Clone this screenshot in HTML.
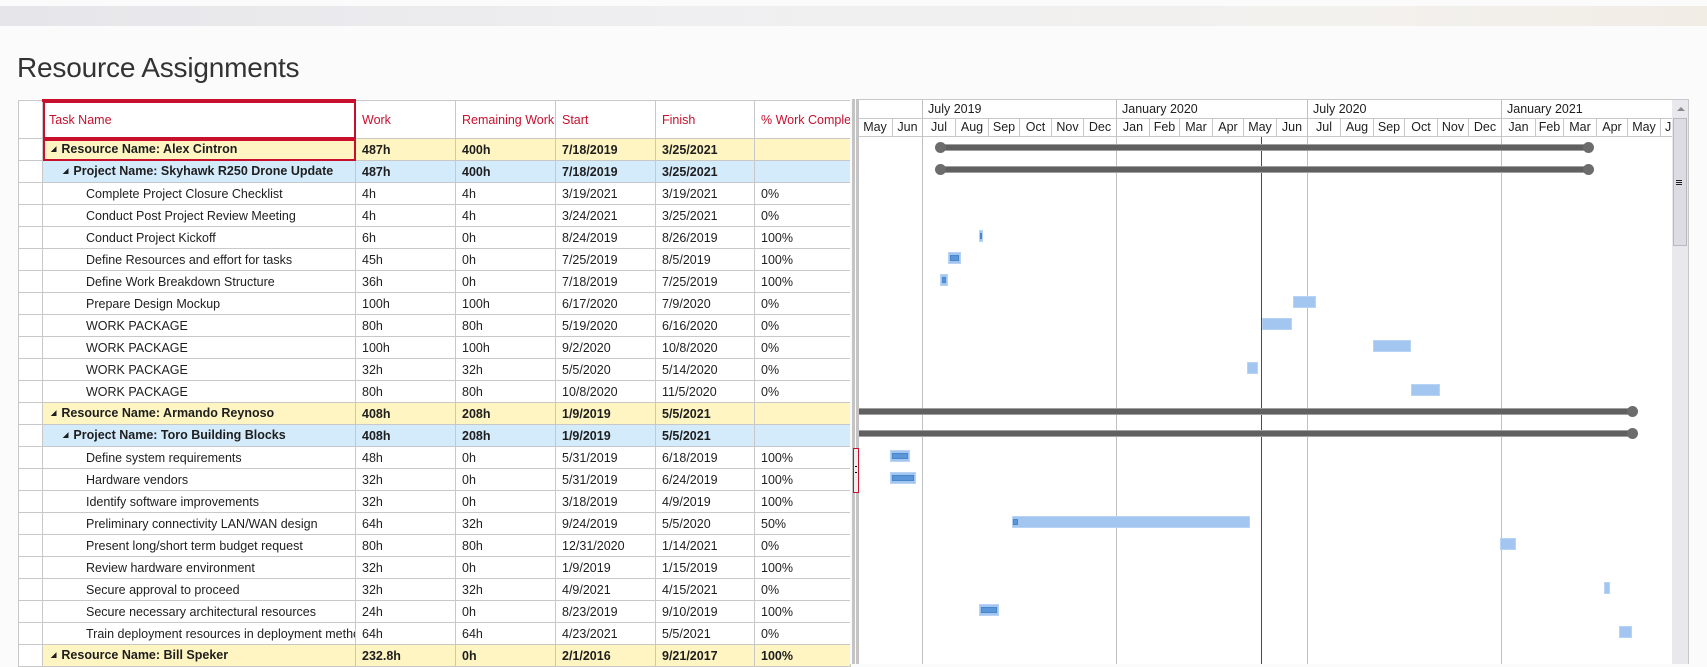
<!DOCTYPE html>
<html><head><meta charset="utf-8"><style>
*{margin:0;padding:0;box-sizing:border-box}
body{width:1707px;height:664px;overflow:hidden;background:#fbfbfb;font-family:"Liberation Sans",sans-serif;color:#1e1e1e;position:relative}
.band{position:absolute;left:0;top:6px;width:1707px;height:20px;background:linear-gradient(90deg,#e6e6ea,#efeff1 40%,#f3f1ee 80%,#f1ece4)}
h1{position:absolute;left:17px;top:52px;font-size:28px;font-weight:normal;color:#333;letter-spacing:-0.2px}
table{position:absolute;left:18px;top:99px;width:832px;border-collapse:collapse;table-layout:fixed;font-size:12.5px;background:#fff}
td{border:1px solid #c8c8c8;height:22px;white-space:nowrap;overflow:hidden;padding:0 0 0 6px;line-height:20px}
tr.h td{height:38px;color:#c8102e;font-size:12.5px;padding-left:6px}
tr.r td{background:#fff5c3;font-weight:bold}
tr.p td{background:#d4ebfc;font-weight:bold}
tr td:first-child{background:#fff!important}
.t1{padding-left:8px!important}.t2{padding-left:20px!important}.t3{padding-left:43px!important}
.tri{font-size:7px;vertical-align:2px;margin-right:5px}
.sel{outline:2px solid #c8102e;outline-offset:-2px}
.g{position:absolute}
.mo{position:absolute;top:118px;height:19px;border-left:1px solid #c8c8c8;font-size:12.5px;line-height:19px;text-align:center}
.yr{position:absolute;top:100px;height:18px;font-size:12.5px;line-height:18px;padding-left:6px}
.vl{position:absolute;top:100px;width:1px;height:564px;background:#c0c0c0}
.b{position:absolute;height:12px;background:#a2c6ef;border:1px solid #b8d4f4}
.b i{position:absolute;left:1px;right:1px;top:2px;height:6px;background:#5b96d8;border:1px solid #4a86cc}
.s{position:absolute;height:7px;background:#5f605f;border-top:1px solid #a0a0a0;border-bottom:1px solid #a0a0a0}
.c{position:absolute;width:11px;height:11px;border-radius:50%;background:#6c6c6c}
</style></head><body>
<div class="band"></div>
<h1>Resource Assignments</h1>
<table>
<colgroup><col style="width:24px"><col style="width:313px"><col style="width:100px"><col style="width:100px"><col style="width:100px"><col style="width:99px"><col style="width:96px"></colgroup>
<tr class="h"><td></td><td class="sel" style="border-top:3px solid #c8102e">Task Name</td><td>Work</td><td>Remaining Work</td><td>Start</td><td>Finish</td><td>% Work Complete</td></tr>
<tr class="r"><td></td><td class="t1 sel"><span class="tri">◢</span>Resource Name: Alex Cintron</td><td>487h</td><td>400h</td><td>7/18/2019</td><td>3/25/2021</td><td></td></tr>
<tr class="p"><td></td><td class="t2"><span class="tri">◢</span>Project Name: Skyhawk R250 Drone Update</td><td>487h</td><td>400h</td><td>7/18/2019</td><td>3/25/2021</td><td></td></tr>
<tr><td></td><td class="t3">Complete Project Closure Checklist</td><td>4h</td><td>4h</td><td>3/19/2021</td><td>3/19/2021</td><td>0%</td></tr>
<tr><td></td><td class="t3">Conduct Post Project Review Meeting</td><td>4h</td><td>4h</td><td>3/24/2021</td><td>3/25/2021</td><td>0%</td></tr>
<tr><td></td><td class="t3">Conduct Project Kickoff</td><td>6h</td><td>0h</td><td>8/24/2019</td><td>8/26/2019</td><td>100%</td></tr>
<tr><td></td><td class="t3">Define Resources and effort for tasks</td><td>45h</td><td>0h</td><td>7/25/2019</td><td>8/5/2019</td><td>100%</td></tr>
<tr><td></td><td class="t3">Define Work Breakdown Structure</td><td>36h</td><td>0h</td><td>7/18/2019</td><td>7/25/2019</td><td>100%</td></tr>
<tr><td></td><td class="t3">Prepare Design Mockup</td><td>100h</td><td>100h</td><td>6/17/2020</td><td>7/9/2020</td><td>0%</td></tr>
<tr><td></td><td class="t3">WORK PACKAGE</td><td>80h</td><td>80h</td><td>5/19/2020</td><td>6/16/2020</td><td>0%</td></tr>
<tr><td></td><td class="t3">WORK PACKAGE</td><td>100h</td><td>100h</td><td>9/2/2020</td><td>10/8/2020</td><td>0%</td></tr>
<tr><td></td><td class="t3">WORK PACKAGE</td><td>32h</td><td>32h</td><td>5/5/2020</td><td>5/14/2020</td><td>0%</td></tr>
<tr><td></td><td class="t3">WORK PACKAGE</td><td>80h</td><td>80h</td><td>10/8/2020</td><td>11/5/2020</td><td>0%</td></tr>
<tr class="r"><td></td><td class="t1"><span class="tri">◢</span>Resource Name: Armando Reynoso</td><td>408h</td><td>208h</td><td>1/9/2019</td><td>5/5/2021</td><td></td></tr>
<tr class="p"><td></td><td class="t2"><span class="tri">◢</span>Project Name: Toro Building Blocks</td><td>408h</td><td>208h</td><td>1/9/2019</td><td>5/5/2021</td><td></td></tr>
<tr><td></td><td class="t3">Define system requirements</td><td>48h</td><td>0h</td><td>5/31/2019</td><td>6/18/2019</td><td>100%</td></tr>
<tr><td></td><td class="t3">Hardware vendors</td><td>32h</td><td>0h</td><td>5/31/2019</td><td>6/24/2019</td><td>100%</td></tr>
<tr><td></td><td class="t3">Identify software improvements</td><td>32h</td><td>0h</td><td>3/18/2019</td><td>4/9/2019</td><td>100%</td></tr>
<tr><td></td><td class="t3">Preliminary connectivity LAN/WAN design</td><td>64h</td><td>32h</td><td>9/24/2019</td><td>5/5/2020</td><td>50%</td></tr>
<tr><td></td><td class="t3">Present long/short term budget request</td><td>80h</td><td>80h</td><td>12/31/2020</td><td>1/14/2021</td><td>0%</td></tr>
<tr><td></td><td class="t3">Review hardware environment</td><td>32h</td><td>0h</td><td>1/9/2019</td><td>1/15/2019</td><td>100%</td></tr>
<tr><td></td><td class="t3">Secure approval to proceed</td><td>32h</td><td>32h</td><td>4/9/2021</td><td>4/15/2021</td><td>0%</td></tr>
<tr><td></td><td class="t3">Secure necessary architectural resources</td><td>24h</td><td>0h</td><td>8/23/2019</td><td>9/10/2019</td><td>100%</td></tr>
<tr><td></td><td class="t3">Train deployment resources in deployment methods</td><td>64h</td><td>64h</td><td>4/23/2021</td><td>5/5/2021</td><td>0%</td></tr>
<tr class="r"><td></td><td class="t1"><span class="tri">◢</span>Resource Name: Bill Speker</td><td>232.8h</td><td>0h</td><td>2/1/2016</td><td>9/21/2017</td><td>100%</td></tr>
</table>

<div class="g" style="left:850px;top:99px;width:9px;height:565px;background:#fbfbfb"></div>
<div class="g" style="left:852px;top:99px;width:3px;height:565px;background:#c4c4c4"></div>
<div class="g" style="left:856px;top:99px;width:3px;height:565px;background:#c4c4c4"></div>
<div class="g" style="left:853px;top:448px;width:6px;height:45px;border:1px solid #c8102e;background:#eee"></div>
<div class="g" style="left:855px;top:466px;width:2px;height:7px;border-top:1px solid #000;border-bottom:1px solid #000"></div>

<div class="g" style="left:859px;top:99px;width:830px;height:565px;background:#fff;border-top:1px solid #c8c8c8;border-right:1px solid #c8c8c8"></div>
<div class="g" style="left:859px;top:118px;width:813px;height:1px;background:#c8c8c8"></div>
<div class="g" style="left:859px;top:136px;width:813px;height:1px;background:#c8c8c8"></div>
<div class="yr" style="left:922px">July 2019</div>
<div class="yr" style="left:1116px">January 2020</div>
<div class="yr" style="left:1307px">July 2020</div>
<div class="yr" style="left:1501px">January 2021</div>
<div class="mo" style="left:858px;width:34px;border-left:0">May</div>
<div class="mo" style="left:892px;width:30px">Jun</div>
<div class="mo" style="left:922px;width:33px">Jul</div>
<div class="mo" style="left:955px;width:33px">Aug</div>
<div class="mo" style="left:988px;width:31px">Sep</div>
<div class="mo" style="left:1019px;width:32px">Oct</div>
<div class="mo" style="left:1051px;width:32px">Nov</div>
<div class="mo" style="left:1083px;width:33px">Dec</div>
<div class="mo" style="left:1116px;width:33px">Jan</div>
<div class="mo" style="left:1149px;width:30px">Feb</div>
<div class="mo" style="left:1179px;width:33px">Mar</div>
<div class="mo" style="left:1212px;width:31px">Apr</div>
<div class="mo" style="left:1243px;width:33px">May</div>
<div class="mo" style="left:1276px;width:31px">Jun</div>
<div class="mo" style="left:1307px;width:33px">Jul</div>
<div class="mo" style="left:1340px;width:33px">Aug</div>
<div class="mo" style="left:1373px;width:31px">Sep</div>
<div class="mo" style="left:1404px;width:33px">Oct</div>
<div class="mo" style="left:1437px;width:31px">Nov</div>
<div class="mo" style="left:1468px;width:33px">Dec</div>
<div class="mo" style="left:1501px;width:34px">Jan</div>
<div class="mo" style="left:1535px;width:28px">Feb</div>
<div class="mo" style="left:1563px;width:33px">Mar</div>
<div class="mo" style="left:1596px;width:31px">Apr</div>
<div class="mo" style="left:1627px;width:33px">May</div>
<div class="mo" style="left:1660px;width:12px;overflow:hidden;text-align:left;padding-left:4px">Jun</div>
<div class="vl" style="left:922px"></div>
<div class="vl" style="left:1116px"></div>
<div class="vl" style="left:1307px"></div>
<div class="vl" style="left:1501px"></div>
<div class="g" style="left:1261px;top:137px;width:1px;height:527px;background:#c8102e"></div>

<div class="s" style="left:940px;top:144px;width:648px"></div><div class="c" style="left:935px;top:142px"></div><div class="c" style="left:1583px;top:142px"></div>
<div class="s" style="left:940px;top:166px;width:648px"></div><div class="c" style="left:935px;top:164px"></div><div class="c" style="left:1583px;top:164px"></div>
<div class="s" style="left:859px;top:408px;width:773px"></div><div class="c" style="left:1627px;top:406px"></div>
<div class="s" style="left:859px;top:430px;width:773px"></div><div class="c" style="left:1627px;top:428px"></div>

<div class="b" style="left:979px;top:230px;width:4px"><i style="left:0;right:0"></i></div>
<div class="b" style="left:948px;top:252px;width:13px"><i></i></div>
<div class="b" style="left:940px;top:274px;width:8px"><i></i></div>
<div class="b" style="left:1293px;top:296px;width:23px"></div>
<div class="b" style="left:1262px;top:318px;width:30px"></div>
<div class="b" style="left:1373px;top:340px;width:38px"></div>
<div class="b" style="left:1247px;top:362px;width:11px"></div>
<div class="b" style="left:1411px;top:384px;width:29px"></div>
<div class="b" style="left:890px;top:450px;width:20px"><i></i></div>
<div class="b" style="left:890px;top:472px;width:26px"><i></i></div>
<div class="b" style="left:1012px;top:516px;width:238px"><i style="right:auto;width:5px;left:0"></i></div>
<div class="b" style="left:1500px;top:538px;width:16px"></div>
<div class="b" style="left:1604px;top:582px;width:6px"></div>
<div class="b" style="left:979px;top:604px;width:20px"><i></i></div>
<div class="b" style="left:1619px;top:626px;width:13px"></div>

<div class="g" style="left:1672px;top:100px;width:16px;height:564px;background:#e9e9ed"></div>
<div class="g" style="left:1677px;top:107px;width:0;height:0;border-left:4px solid transparent;border-right:4px solid transparent;border-bottom:4px solid #8a8a8a"></div>
<div class="g" style="left:1673px;top:118px;width:14px;height:128px;background:#dcdce2;border:1px solid #b8b8c0"></div>
<div class="g" style="left:1676px;top:180px;width:6px;height:5px;border-top:1px solid #222;border-bottom:1px solid #222"></div>
<div class="g" style="left:1676px;top:182px;width:6px;height:1px;background:#222"></div>
</body></html>
